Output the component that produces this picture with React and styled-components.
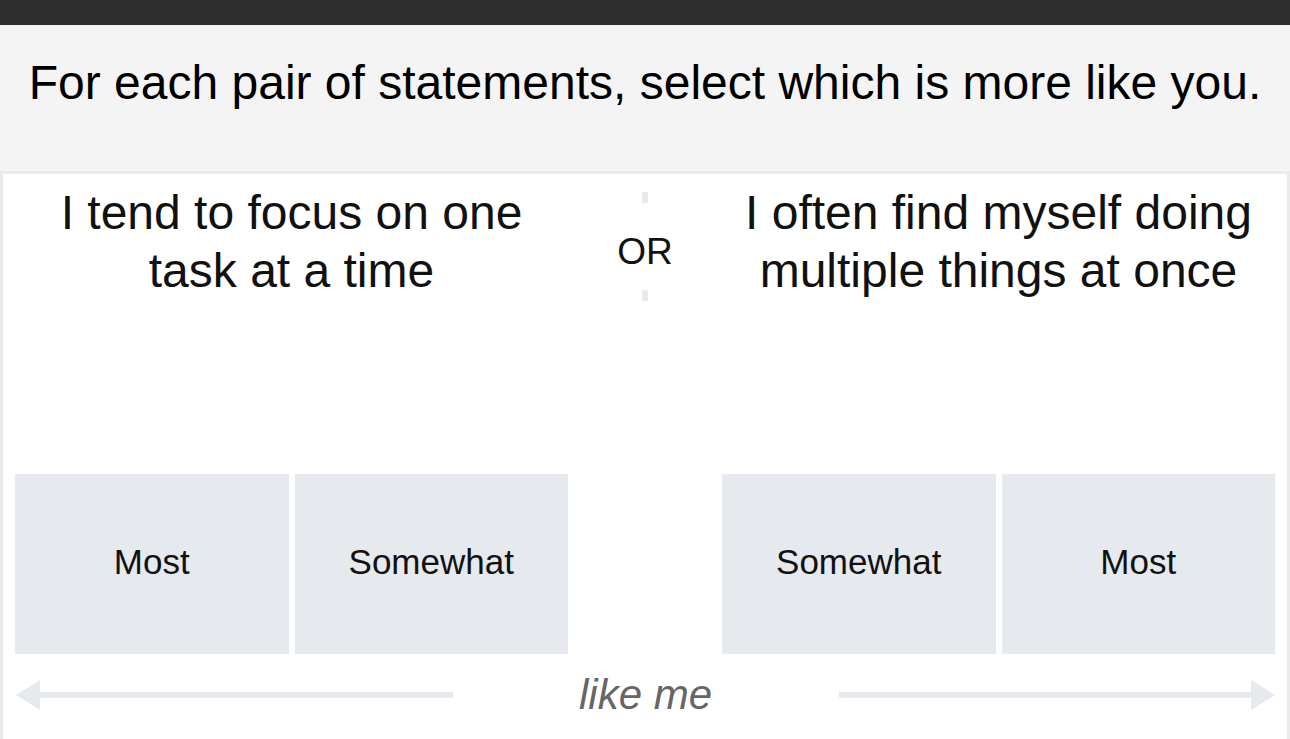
import React from 'react';
import styled, { createGlobalStyle } from 'styled-components';

const GlobalStyle = createGlobalStyle`
  html, body {
    margin: 0;
    padding: 0;
    background: #ebebeb;
    font-family: "Liberation Sans", Arial, sans-serif;
  }
`;

const TopBar = styled.div`
  height: 25px;
  background: #2d2d2d;
`;

const Header = styled.div`
  background: #f4f4f4;
  padding: 30px 0 61px;
  text-align: center;
`;

const Prompt = styled.h1`
  margin: 0;
  font-size: 48px;
  font-weight: 400;
  line-height: 55px;
  color: #000;
`;

const Card = styled.div`
  background: #fff;
  border: 3px solid #ebebeb;
  border-bottom: none;
  padding: 0 12px 40px;
  display: grid;
  grid-template-columns: 1fr 154px 1fr;
`;

const Statement = styled.div`
  height: 300px;
  box-sizing: border-box;
  padding-top: 10px;
  font-size: 48px;
  line-height: 1.2;
  text-align: center;
  color: #111;
`;

const Divider = styled.div`
  height: 300px;
  box-sizing: border-box;
  padding-top: 18px;
  display: flex;
  flex-direction: column;
  align-items: center;
`;

const Dash = styled.span`
  width: 6px;
  height: 11px;
  background: #e6e9ee;
`;

const OrLabel = styled.span`
  margin: 28px 0 18px;
  font-size: 37px;
  line-height: 41px;
  color: #111;
`;

const ButtonGroup = styled.div`
  display: grid;
  grid-template-columns: 1fr 1fr;
  gap: 6px;
`;

const Choice = styled.button`
  height: 180px;
  border: none;
  margin: 0;
  padding: 0 0 4px;
  background: #e6e9ee;
  font-family: inherit;
  font-size: 35px;
  color: #111;
  cursor: pointer;

  &:hover {
    background: #dde1e7;
  }
`;

const Scale = styled.div`
  grid-column: 1 / -1;
  margin-top: 17px;
  display: grid;
  grid-template-columns: 1fr 386px 1fr;
  align-items: center;
  padding-left: 1px;
`;

const Arrow = styled.div`
  display: flex;
  align-items: center;
  flex-direction: ${(p) => (p.$right ? 'row-reverse' : 'row')};
`;

const Head = styled.span`
  width: 0;
  height: 0;
  border-top: 15px solid transparent;
  border-bottom: 15px solid transparent;
  ${(p) =>
    p.$right
      ? 'border-left: 24px solid #e6e9ee;'
      : 'border-right: 24px solid #e6e9ee;'}
`;

const Shaft = styled.span`
  flex: 1;
  height: 6px;
  background: #e6e9ee;
`;

const ScaleLabel = styled.span`
  text-align: center;
  font-size: 42px;
  font-style: italic;
  line-height: 48px;
  color: #666;
`;

const App = () => (
  <>
    <GlobalStyle />
    <TopBar />
    <Header>
      <Prompt>For each pair of statements, select which is more like you.</Prompt>
    </Header>
    <Card>
      <Statement>I tend to focus on one task at a time</Statement>
      <Divider>
        <Dash />
        <OrLabel>OR</OrLabel>
        <Dash />
      </Divider>
      <Statement>I often find myself doing multiple things at once</Statement>

      <ButtonGroup>
        <Choice>Most</Choice>
        <Choice>Somewhat</Choice>
      </ButtonGroup>
      <div />
      <ButtonGroup>
        <Choice>Somewhat</Choice>
        <Choice>Most</Choice>
      </ButtonGroup>

      <Scale>
        <Arrow>
          <Head />
          <Shaft />
        </Arrow>
        <ScaleLabel>like me</ScaleLabel>
        <Arrow $right>
          <Head $right />
          <Shaft />
        </Arrow>
      </Scale>
    </Card>
  </>
);

export default App;
